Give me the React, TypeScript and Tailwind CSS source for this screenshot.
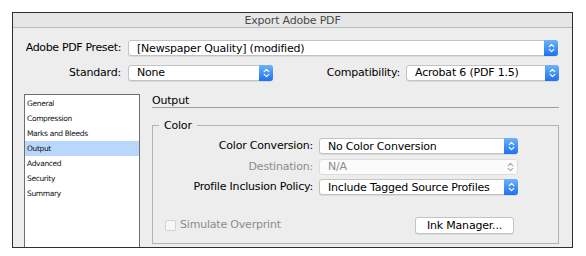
import React from "react";

const font = { fontFamily: '"DejaVu Sans", "Liberation Sans", sans-serif' };

function Chevrons({ color }: { color: string }) {
    return (
        <svg width="7" height="10" viewBox="0 0 7 10" fill="none" stroke={color} strokeWidth="1.2" strokeLinecap="round" strokeLinejoin="round">
            <path d="M1.2 3.6 L3.5 1.4 L5.8 3.6" />
            <path d="M1.2 6.4 L3.5 8.6 L5.8 6.4" />
        </svg>
    );
}

function Select({ value, width, disabled }: { value: string; width: string; disabled?: boolean }) {
    return (
        <div className={`${width} h-[16px] flex items-stretch rounded-[3px] border ${disabled ? 'border-[#dcdcdc] bg-[#fbfbfb]' : 'border-[#c3c3c3] bg-white shadow-[0_1px_0_rgba(0,0,0,0.08)]'}`}>
            <div className={`flex-1 pl-[8px] flex items-center text-[11px] tracking-[-0.2px] leading-none ${disabled ? 'text-[#8c8c8c]' : 'text-black'}`}>
                {value}
            </div>
            {disabled ? (
                <div className="w-[14px] flex items-center justify-center">
                    <Chevrons color="#a8a8a8" />
                </div>
            ) : (
                <div className="w-[14px] -my-px -mr-px rounded-r-[3px] bg-gradient-to-b from-[#6cb3fa] to-[#1c6ff0] flex items-center justify-center">
                    <Chevrons color="#ffffff" />
                </div>
            )}
        </div>
    );
}

const pages = ["General", "Compression", "Marks and Bleeds", "Output", "Advanced", "Security", "Summary"];

export default function App() {
    return (
        <div className="w-[586px] h-[256px] bg-white pl-[12px] pt-[12px]" style={font}>
            <div className="w-[561px] h-[236px] border border-[#2e2e2e] bg-[#ededed] overflow-hidden flex flex-col tracking-[-0.2px]">
                <div className="h-[15px] shrink-0 border-b border-[#b9b9b9] bg-[#e6e6e6] flex items-center justify-center text-[11px] leading-none text-[#4a4a4a]">
                    Export Adobe PDF
                </div>

                <div className="pt-[12px] pr-[13px] flex flex-col gap-[8px]">
                    <div className="flex items-center">
                        <div className="w-[109px] pr-[1px] text-right text-[11px] tracking-[-0.35px] text-black">Adobe PDF Preset:</div>
                        <div className="ml-[6px]">
                            <Select value="[Newspaper Quality] (modified)" width="w-[430px]" />
                        </div>
                    </div>
                    <div className="flex items-center">
                        <div className="w-[109px] pr-[1px] text-right text-[11px] text-black">Standard:</div>
                        <div className="ml-[6px]">
                            <Select value="None" width="w-[145px]" />
                        </div>
                        <div className="flex-1 text-right text-[11px] text-black pr-[6px]">Compatibility:</div>
                        <Select value="Acrobat 6 (PDF 1.5)" width="w-[153px]" />
                    </div>
                </div>

                <div className="flex flex-1 mt-[13px] pl-[11px] pr-[13px] gap-[12px]">
                    <div className="w-[116px] h-[220px] border border-[#6f6f6f] bg-white pt-[1px]">
                        {pages.map((p) => (
                            <div key={p} className={`h-[15px] pl-[2px] flex items-center text-[7.5px] tracking-[-0.35px] leading-none text-[#111] ${p === 'Output' ? 'bg-[#b8d7fb]' : ''}`}>
                                {p}
                            </div>
                        ))}
                    </div>

                    <div className="flex-1 flex flex-col">
                        <div className="h-[12px] text-[11px] leading-none text-black flex items-center">Output</div>
                        <div className="mt-[1px] h-px bg-[#9c9c9c]"></div>

                        <div className="relative mt-[17px] h-[119px] border border-[#b3b3b3] pt-[12px]">
                            <div className="absolute -top-[7px] left-[6px] px-[5px] bg-[#ededed] text-[11px] leading-[13px] text-black">Color</div>

                            <div className="flex flex-col gap-[4px]">
                                <div className="flex items-center">
                                    <div className="w-[160px] text-right text-[11px] text-black">Color Conversion:</div>
                                    <div className="ml-[6px]"><Select value="No Color Conversion" width="w-[199px]" /></div>
                                </div>
                                <div className="flex items-center">
                                    <div className="w-[160px] text-right text-[11px] text-[#8c8c8c]">Destination:</div>
                                    <div className="ml-[6px]"><Select value="N/A" width="w-[199px]" disabled /></div>
                                </div>
                                <div className="flex items-center">
                                    <div className="w-[160px] text-right text-[11px] text-black">Profile Inclusion Policy:</div>
                                    <div className="ml-[6px]"><Select value="Include Tagged Source Profiles" width="w-[199px]" /></div>
                                </div>
                            </div>

                            <div className="flex items-center mt-[21px] pl-[12px] pr-[44px]">
                                <div className="w-[11px] h-[11px] rounded-[2px] border border-[#d3d3d3] bg-[#f7f7f7]"></div>
                                <div className="ml-[4px] text-[11px] text-[#8c8c8c]">Simulate Overprint</div>
                                <div className="flex-1"></div>
                                <div className="w-[99px] h-[17px] rounded-[3px] border border-[#c3c3c3] bg-white shadow-[0_1px_0_rgba(0,0,0,0.08)] flex items-center justify-center text-[11px] leading-none text-black">
                                    Ink Manager...
                                </div>
                            </div>
                        </div>
                    </div>
                </div>
            </div>
        </div>
    );
}
